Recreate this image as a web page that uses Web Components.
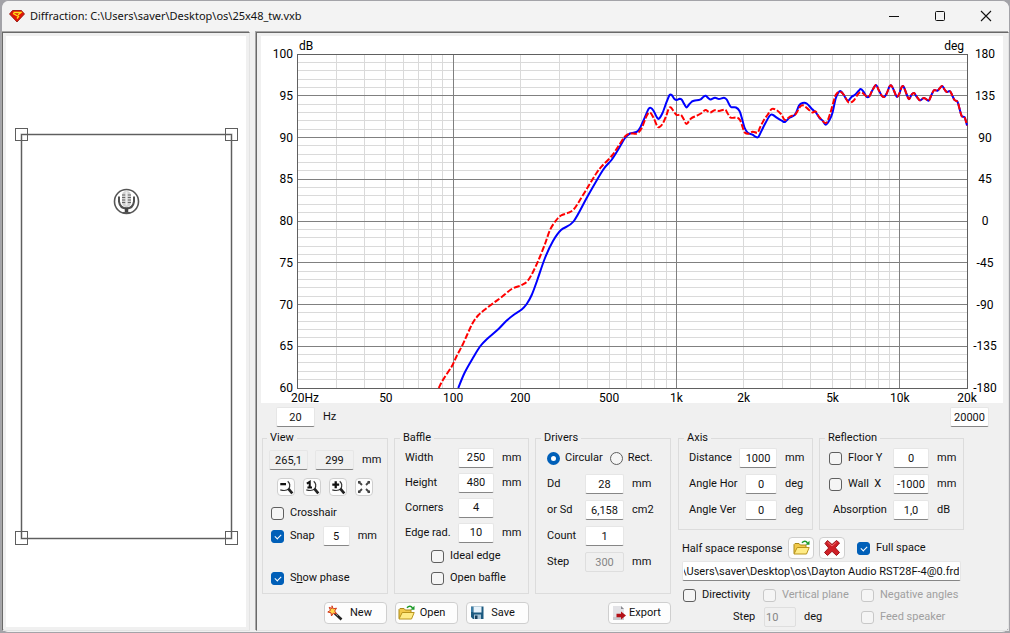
<!DOCTYPE html>
<html lang="en">
<head>
<meta charset="utf-8">
<title>Diffraction</title>
<style>
html, body { margin: 0; height: 100%; background: #a3a3a8; }
</style>
</head>
<body>
<diffraction-window></diffraction-window>
<script>
const define = (name, html, setup) => {
  const tpl = document.createElement('template');
  tpl.innerHTML = html;
  customElements.define(name, class extends HTMLElement {
    constructor() {
      super();
      this.attachShadow({ mode: 'open' }).append(tpl.content.cloneNode(true));
    }
    connectedCallback() { if (setup) setup(this, this.shadowRoot); }
  });
};

/* ---------- icons ---------- */
const icons = {
  gem: '<svg viewBox="0 0 16 14" width="16" height="14"><path d="M3.500 1.500h9L15.500 5 8 13 .5 5z" fill="#e01808" stroke="#8a0d06" stroke-width=".8"/><path d="M4.500 3.500h7.500L9 6M4 4.500l5.500 3L8 9.500" stroke="#ffe21a" stroke-width="1.300" fill="none"/></svg>',
  min: '<svg viewBox="0 0 12 12" width="12" height="12"><path d="M1 6.500h10" stroke="#111"/></svg>',
  max: '<svg viewBox="0 0 12 12" width="12" height="12"><rect x="1.500" y="1.500" width="9" height="9" rx="1" stroke="#111" fill="none"/></svg>',
  close: '<svg viewBox="0 0 12 12" width="12" height="12"><path d="M1 1l10 10M11 1L1 11" stroke="#111" stroke-width="1.100"/></svg>',
  zoomout: '<svg viewBox="1 0 14 14" width="16" height="16"><path d="M3 4.500h5" stroke="#111" stroke-width="2"/><path d="M9.500 2q3 2.500 1 6.500Q8 11 3 9.500" fill="none" stroke="#333"/><path d="M10 8.500l3.500 4" stroke="#222" stroke-width="2.400"/></svg>',
  zoomone: '<svg viewBox="1 0 14 14" width="16" height="16"><path d="M3.500 4L6 2.500V8M4 7.500h4" fill="none" stroke="#111" stroke-width="1.800"/><path d="M9.500 2q3 2.500 1 6.500Q8 11 3 9.500" fill="none" stroke="#333"/><path d="M10 8.500l3.500 4" stroke="#222" stroke-width="2.400"/></svg>',
  zoomin: '<svg viewBox="1 0 14 14" width="16" height="16"><path d="M3 5h6M6 2v6" stroke="#111" stroke-width="2"/><path d="M9.500 2q3 2.500 1 6.500Q8 11 3 9.500" fill="none" stroke="#333"/><path d="M10 8.500l3.500 4" stroke="#222" stroke-width="2.400"/></svg>',
  fit: '<svg viewBox="0 0 16 16" width="16" height="16"><path d="M2.500 2.500l3.500 3.500M13.500 2.500L10 6M2.500 13.500L6 10M13.500 13.500L10 10" stroke="#444" stroke-width="1.800"/><path d="M2 5V2h3zM14 5V2h-3zM2 11v3h3zM14 11v3h-3z" fill="#444"/></svg>',
  wand: '<svg viewBox="0 0 16 16" width="16" height="16"><path d="M7.500 8l7 6.500" stroke="#222" stroke-width="2.600"/><path d="M8 8l3 2.800" stroke="#999" stroke-width="1"/><path d="M5 .8l1.200 3 3.300-.6-1.800 2.800 1.800 2.800-3.200-.6L4.500 11 4 7.800.8 7l2.700-1.700-1.300-3L5 3.500z" fill="#ffd94a" stroke="#d2361c" stroke-width="1"/></svg>',
  folder: '<svg viewBox="0 0 17 16" width="17" height="16"><path d="M1 13.500V4.500l1-1h4l1.300 1.500H13V8" fill="#f2c94a" stroke="#a98a1a"/><path d="M1 14L4.200 7.500h12L13.500 14z" fill="#ffec86" stroke="#b8941c"/><path d="M9 2.800Q12-.3 14.500 3" fill="none" stroke="#1d9a2a" stroke-width="1.600"/><path d="M16.500.8v4h-4z" fill="#1d9a2a"/></svg>',
  disk: '<svg viewBox="0 0 16 16" width="16" height="16"><path d="M2 1.500h12.500V14H4l-2-2z" fill="#1c5a80"/><path d="M4.500 1.500h8v6h-8z" fill="#e8f3fb"/><path d="M5 9.500h7V14H5z" fill="#a9c4d6"/><path d="M6 10.500h2.500V14H6z" fill="#173f5c"/><path d="M3 2v5" stroke="#5da3d0"/></svg>',
  exporter: '<svg viewBox="0 0 16 16" width="16" height="16"><path d="M2 1h8l3 3v11H2z" fill="#e2e2e6"/><path d="M10 1v3h3z" fill="#8a8a90"/><path d="M2 12h11v3H2z" fill="#c9c9ce"/><path d="M5.500 8.800H10V6.500l5 4-5 4v-2.300H5.500z" fill="#b30f17"/></svg>',
  cross: '<svg viewBox="0 0 18 18" width="18" height="18"><path d="M2 4.500L4.500 1.500 9 5.500 13.500 1.500 16.500 4 12.300 8.800 16.500 13.500 13.500 16.500 9 12.300 4.500 16.500 1.500 13.500 5.700 9z" fill="#cf1f26" stroke="#9c1016"/><path d="M4.500 3l4.500 4 4.500-4" stroke="#ef6a6c" fill="none"/></svg>'
};

define('app-icon', `<style>:host{display:inline-flex;flex:none}i{display:flex}svg{display:block}</style><i></i>`,
  (el, root) => { root.querySelector('i').innerHTML = icons[el.getAttribute('name')] || ''; });

/* ---------- controls ---------- */
define('title-bar', `
<style>
:host{display:flex;align-items:center;height:31px;box-sizing:border-box;padding:0 0 2px 7px;background:#f3f3f3;border-radius:8px 8px 0 0;font-family:"Noto Sans","Liberation Sans",sans-serif;font-size:11px;line-height:16px;color:#111}
h1{flex:1;margin:0 0 0 5px;font:inherit}
button{display:flex;align-items:center;justify-content:center;width:46px;height:29px;border:0;padding:0;background:none}
</style>
<app-icon name="gem"></app-icon>
<h1><slot></slot></h1>
<button aria-label="Minimize"><app-icon name="min"></app-icon></button>
<button aria-label="Maximize"><app-icon name="max"></app-icon></button>
<button aria-label="Close"><app-icon name="close"></app-icon></button>`);

define('group-box', `
<style>
:host{display:block}
fieldset{margin:0;padding:0 0 0 var(--pad,8px);border:1px solid #dcdcdc;height:100%;box-sizing:border-box;min-width:0}
legend{margin-left:var(--legend,0);padding:0 3px;line-height:14px;height:14px}
</style>
<fieldset><legend></legend><slot></slot></fieldset>`,
  (el, root) => { root.querySelector('legend').textContent = el.getAttribute('caption'); });

define('num-field', `
<style>
:host{display:flex;align-items:center;white-space:nowrap;line-height:16px}
label{flex:none;width:var(--label,53px)}
label:empty{display:none}
input{flex:none;width:var(--field,36px);height:20px;box-sizing:border-box;margin:0;padding:0 1px;border:1px solid #e6e6e6;border-bottom-color:#868686;border-radius:2px;background:#fff;font:inherit;color:inherit;text-align:var(--align,center)}
input[readonly]{background:#f0f0f0}
input:disabled{background:#f0f0f0;color:#858585;border-color:#dedede}
span{margin-left:8px}
span:empty{display:none}
</style>
<label for="v"></label><input id="v" type="text"><span></span>`,
  (el, root) => {
    const input = root.querySelector('input');
    root.querySelector('label').textContent = el.getAttribute('label') || '';
    root.querySelector('span').textContent = el.getAttribute('unit') || '';
    input.value = el.getAttribute('value');
    input.readOnly = el.hasAttribute('readonly');
    input.disabled = el.hasAttribute('disabled');
    if (!el.hasAttribute('label')) input.setAttribute('aria-label', el.getAttribute('name'));
  });

define('check-box', `
<style>
:host{display:flex;align-items:center;white-space:nowrap;line-height:16px}
:host([disabled]){color:#a0a0a0}
label{display:flex;align-items:center}
input{appearance:none;flex:none;width:13px;height:13px;box-sizing:border-box;margin:0 6px 0 0;border:1px solid #5f5f5f;border-radius:3px;background:#f5f5f5;display:flex;justify-content:center}
input:disabled{border-color:#c8c8c8}
input:checked{border-color:#005fb8;background:#005fb8}
input:checked::before{content:"";width:3px;height:5px;margin-top:2px;border:solid #fff;border-width:0 1px 1px 0;transform:rotate(45deg)}
input[type=radio]{border-radius:50%;margin-right:5px}
input[type=radio]:checked{border:4px solid #005fb8;background:#fff}
input[type=radio]:checked::before{display:none}
</style>
<label><input type="checkbox"><span><slot></slot></span></label>`,
  (el, root) => {
    const input = root.querySelector('input');
    if (el.hasAttribute('radio')) input.type = 'radio';
    input.checked = el.hasAttribute('checked');
    input.disabled = el.hasAttribute('disabled');
  });

define('push-button', `
<style>
:host{display:inline-flex;width:63px;height:22px}
button{display:flex;align-items:center;width:100%;height:100%;box-sizing:border-box;padding:0 0 0 2px;border:1px solid #cfcfcf;border-radius:4px;background:#fdfdfd;font:inherit;color:inherit;line-height:16px}
span{flex:1;text-align:center;padding-right:7px}
:host([small]){width:18px;height:18px}
:host([icononly]){width:26px}
:host([small]) button,:host([icononly]) button{justify-content:center;padding:0}
:host([small]) span,:host([icononly]) span{display:none}
</style>
<button><span><slot></slot></span></button>`,
  (el, root) => {
    const icon = document.createElement('app-icon');
    icon.setAttribute('name', el.getAttribute('icon'));
    root.querySelector('button').prepend(icon);
    if (el.title) root.querySelector('button').setAttribute('aria-label', el.title);
  });

/* ---------- baffle drawing ---------- */
define('baffle-view', `
<style>
:host{display:flex;background:#fff}
svg{display:block;width:100%;height:100%;min-height:0}
</style>
<svg viewBox="0 0 240 591" preserveAspectRatio="xMinYMin" role="img" aria-label="Baffle outline">
<g fill="none" stroke="#5e5e5e">
<rect x="15.500" y="98.500" width="210" height="404" stroke="#b4b4b4" stroke-width="2"/>
<rect x="15.500" y="98.500" width="210" height="404"/>
<rect x="9.500" y="92.500" width="12" height="12"/><rect x="219.500" y="92.500" width="12" height="12"/>
<rect x="9.500" y="495.500" width="12" height="13"/><rect x="219.500" y="495.500" width="12" height="13"/>
</g>
<g transform="translate(120.500 165.500)">
<circle r="12" fill="#fff" stroke="#555" stroke-width="1.600"/>
<rect x="-4.500" y="-10.500" width="9" height="16" rx="4.500" fill="#d0d0d0"/>
<path d="M-4.500-6.500h3.500M-4.500-4h3.500M-4.500-1.500h3.500M-4.500 1h3.500M1-6.500h3.500M1-4h3.500M1-1.500h3.500M1 1h3.500" stroke="#666"/>
<path d="M0-10V4" stroke="#eee" stroke-width="2"/>
<path d="M-7.500-5V0Q-6.500 7 0 7T7.500 0V-5" fill="none" stroke="#505050" stroke-width="2"/>
<path d="M0 6v5" stroke="#444" stroke-width="3.500"/>
<path d="M-4 11.200h8" stroke="#555" stroke-width="1.500"/>
</g>
</svg>`);

/* ---------- response chart ---------- */
const blue = [458.3,388, 464.5,373, 473.5,357, 480,346.5, 487,339, 498.5,329, 506.7,320.5, 513.5,315, 521.7,309.5, 526.7,304, 531.7,295, 537.3,280, 545,258, 553,241, 561,230, 573.5,221.5, 587.5,196.5, 603,170, 611.5,160, 618.5,149, 625,138, 630,133.5, 636.5,132, 640,128, 645,117, 648.5,109, 650.7,107.9, 653.5,110.7, 656.7,117, 659,118.7, 662.5,113, 666.7,101.7, 669.5,95.2, 671.5,94.9, 674.5,99, 676.7,100, 679.5,98.7, 681.7,99.7, 684.5,104.5, 686.5,107.5, 688.7,105, 691.7,101.7, 695,100.5, 700,99.7, 703.5,96.7, 705.7,95.8, 708.5,98.3, 710.7,99.5, 715,97.7, 719,99, 724,97.7, 726.7,99.5, 730.7,106.7, 736,107.5, 739.5,111, 741.7,117.5, 744.5,127.5, 747.7,132.7, 752.5,134.7, 756.7,137.3, 759,136, 763.5,126.7, 769.5,116, 772.5,114.7, 776.7,117.7, 781.7,120.7, 785,122, 789.5,117.7, 795,114.7, 799,105.5, 802.5,103, 806.7,103.5, 811.7,108.7, 816,112.7, 819.5,118, 822.7,120.7, 825.7,124.7, 829.5,120, 832.5,112.7, 835.7,98.5, 838.5,92.5, 840.7,91.2, 843.5,94.5, 847.7,100.7, 851.7,96.7, 855,94.7, 858.5,91, 860.7,89, 863.5,91.7, 866.7,97];
const red = [438.7,388, 443.5,379, 451.7,366.5, 456.7,356, 462.5,345, 467.5,334, 472.7,323, 478.5,315, 485,309.5, 493.5,303, 501.7,297, 511.7,289, 521.7,285, 527.5,281, 533,272, 539,259, 545,244, 550,230, 556,220.5, 561,215.5, 568.5,212.7, 574,209, 580,200, 588.5,186, 596.7,172.7, 602.5,165.5, 611.7,156, 618.5,146, 625,136.5, 630,133.5, 637,133.5, 641.7,128, 646.7,115.7, 650,112.5, 653.5,117.7, 657,125.7, 659,127.2, 662.5,124, 666,116.5, 668.7,108.7, 670.7,107.3, 673.5,111, 676.7,115, 680.7,114.7, 683.5,118.7, 686.5,124, 691,118.5, 696.7,115.7, 701.7,113, 705.5,110, 710,112.5, 714.5,110.2, 719,110.9, 725,109.7, 727.7,113.5, 730.7,117.7, 736.7,117.5, 740,120, 742.7,127.5, 745,132.7, 748.5,133.7, 752.7,131.7, 757.5,132.7, 760,127.5, 763.5,120.7, 767.5,115, 771.7,109, 776,109.7, 781,114, 785,120, 790,116.5, 795.7,114, 800,106.7, 803.5,105.5, 808.5,109.5, 812.5,112.5, 815.7,111.5, 819,116.7, 825.7,123, 830,114, 833.5,101.7, 836,94.5, 840,91.7, 844,95, 848.5,102.3, 853.5,100.7, 858.5,93.5, 861.7,92.5, 866.7,96.5];
const tail = [869.5,96, 872.5,90, 876,85, 878.7,90, 881.7,95.7, 884,97, 886.7,93.5, 889.5,86.5, 891.5,85.7, 894,90.7, 896.7,96.7, 899,94.5, 901.7,87, 903.7,86.7, 906.7,94.5, 909,99.2, 911.7,94.5, 914,93, 916.7,96.7, 920,100.3, 924,97.9, 928.5,100.7, 931,96, 934,90.2, 937.7,90.5, 942,86, 944.5,89.5, 946.7,92, 950,91.2, 952.5,96, 954.5,100, 957.5,101.7, 959.5,108.5, 961.7,116, 964.7,117.5, 967,125.5];
const curve = flat => {
  const p = [];
  for (let i = 0; i < flat.length; i += 2) p.push([flat[i] - 297, flat[i + 1] - 54]);
  let d = `M${p[0]}`;
  for (let i = 0; i < p.length - 1; i++) {
    const a = p[i - 1] || p[i], b = p[i], c = p[i + 1], e = p[i + 2] || c;
    const q = (m, n, s) => [(m[0] + s * n[0] / 6).toFixed(1), (m[1] + s * n[1] / 6).toFixed(1)];
    d += `C${q(b, [c[0] - a[0], c[1] - a[1]], 1)} ${q(c, [e[0] - b[0], e[1] - b[1]], -1)} ${c[0].toFixed(1)} ${c[1].toFixed(1)}`;
  }
  return d;
};

define('response-chart', `
<style>
:host{display:grid;grid-template:18px minmax(200px,1fr) 15px / 36px 1fr 36px;box-sizing:border-box;background:#fff;font-size:12px;line-height:16px;color:#000}
.units{grid-area:1/2;display:flex;justify-content:space-between;padding:2px 3px 0 2px}
.scale{display:flex;flex-direction:column;justify-content:space-between;margin:-8px 0}
.db{grid-area:2/1;text-align:right;padding-right:4px}
.deg{grid-area:2/3;text-align:center}
.plot{grid-area:2/2;position:relative;min-height:0}
svg{position:absolute;inset:0;width:100%;height:100%;overflow:visible}
path{fill:none;vector-effect:non-scaling-stroke}
.freq{grid-area:3/2;display:grid;grid-template-columns:398fr 301fr 301fr 398fr 301fr 301fr 398fr 301fr 301fr 0;padding-top:2px}
.freq span{width:40px;margin-left:-20px;text-align:center}
.freq span:first-child{margin-left:-6px;text-align:left}
</style>
<div class="units"><span>dB</span><span>deg</span></div>
<div class="scale db"></div>
<div class="plot"><svg viewBox="0 0 670 334" preserveAspectRatio="none" role="img" aria-label="Frequency response"></svg></div>
<div class="scale deg"></div>
<div class="freq"></div>`,
  (el, root) => {
    const spans = (sel, list) => root.querySelector(sel).innerHTML = list.map(t => `<span>${t}</span>`).join('');
    spans('.db', [100, 95, 90, 85, 80, 75, 70, 65, 60]);
    spans('.deg', [180, 135, 90, 45, 0, -45, -90, -135, -180]);
    spans('.freq', ['20Hz', 50, 100, 200, 500, '1k', '2k', '5k', '10k', '20k']);
    let minor = '', major = '';
    for (let i = 1; i < 40; i++) {
      const line = `M0 ${Math.floor(i * 8.35) + .5}H670`;
      if (i % 5) minor += line; else major += line;
    }
    for (let dec = 10; dec <= 10000; dec *= 10)
      for (let n = 1; n < 10; n++) {
        const f = dec * n;
        if (f <= 20 || f >= 20000) continue;
        const line = `M${Math.floor(Math.log10(f / 20) / 3 * 670) + .5} 0V334`;
        if (n === 1) major += line; else minor += line;
      }
    root.querySelector('svg').innerHTML =
      `<g shape-rendering="crispEdges"><path d="${minor}" stroke="#dadada"/><path d="${major}" stroke="#808080"/>` +
      `<path d="M.5.5H670.500V334.500H.5z" stroke="#606060"/></g>` +
      `<path d="${curve(blue.concat(tail))}" stroke="#0000ff" stroke-width="2"/>` +
      `<path d="${curve(red.concat(tail))}" stroke="#ff0000" stroke-width="2" stroke-dasharray="6 2"/>`;
  });

/* ---------- control panel ---------- */
define('control-panel', `
<style>
:host{display:flex;gap:7px;padding:0 0 2px 1px}
.left{display:grid;grid-template-columns:126px 135px 136px;grid-template-rows:163px 22px;column-gap:6px;row-gap:8px}
.right{display:flex;flex-direction:column;width:286px}
.files{grid-column:1/3;display:flex;justify-content:flex-end;gap:8px}
.export{justify-self:end}
.row{display:flex;align-items:center;height:26px}
.view{--pad:6px;--field:39px}
.view .fields{height:30px;gap:7px}
.view .zoom{gap:8px;height:24px;padding-left:8px}
.view .cross{height:28px;padding-left:2px}
.view .snap{height:18px;padding-left:2px;--field:27px;justify-content:space-between;padding-right:10px}
.view .phase{height:22px;margin-top:22px;padding-left:2px}
.baffle{--pad:10px}
.baffle num-field{height:25px}
.baffle check-box{height:22px;padding-left:26px}
.drivers{--pad:11px;--label:38px;--field:39px}
.drivers .row{gap:7px}
.drivers num-field,.axis num-field{height:26px}
.boxes{display:grid;grid-template-columns:135px 145px;gap:6px;height:99px}
.axis{--pad:10px;--label:56px;--field:32px}
.axis .wide{--label:50px;--field:38px}
.refl{--pad:9px;--label:60px}
.refl check-box{width:64px}
.refl .abs{padding-left:4px}
.half{height:26px;margin-top:5px;padding-left:4px}
.half span{width:106px}
.half push-button{margin-right:5px}
.half check-box{margin-left:7px}
.path{--field:279px;--align:right;padding-left:4px}
.opts{display:grid;grid-template-columns:80px 98px 1fr;grid-auto-rows:22px;align-items:center;padding:3px 0 0 5px}
.opts num-field{grid-column:1/3;padding-left:50px;--label:31px;--field:32px;--align:left}
.baffle{--legend:-5px}.drivers{--legend:-6px}.refl{--legend:-4px}
.view{--legend:-2px}.axis{--legend:-5px}
</style>
<div class="left">
  <group-box class="view" caption="View">
    <div class="row fields"><num-field name="X" value="265,1" readonly></num-field><num-field name="Y" value="299" unit="mm" readonly></num-field></div>
    <div class="row zoom"><push-button small icon="zoomout" title="Zoom out"></push-button><push-button small icon="zoomone" title="Actual size"></push-button><push-button small icon="zoomin" title="Zoom in"></push-button><push-button small icon="fit" title="Fit"></push-button></div>
    <div class="row cross"><check-box>Crosshair</check-box></div>
    <div class="row snap"><check-box checked>Snap</check-box><num-field name="Snap step" value="5" unit="mm"></num-field></div>
    <div class="row phase"><check-box checked>S<u>h</u>ow phase</check-box></div>
  </group-box>
  <group-box class="baffle" caption="Baffle">
    <num-field label="Width" value="250" unit="mm"></num-field>
    <num-field label="Height" value="480" unit="mm"></num-field>
    <num-field label="Corners" value="4"></num-field>
    <num-field label="Edge rad." value="10" unit="mm"></num-field>
    <check-box>Ideal edge</check-box>
    <check-box>Open baffle</check-box>
  </group-box>
  <group-box class="drivers" caption="Drivers">
    <div class="row"><check-box radio checked>Circular</check-box><check-box radio>Rect.</check-box></div>
    <num-field label="Dd" value="28" unit="mm"></num-field>
    <num-field label="or Sd" value="6,158" unit="cm2"></num-field>
    <num-field label="Count" value="1"></num-field>
    <num-field label="Step" value="300" unit="mm" disabled></num-field>
  </group-box>
  <div class="files"><push-button icon="wand">New</push-button><push-button icon="folder">Open</push-button><push-button icon="disk">Save</push-button></div>
  <push-button class="export" icon="exporter">Export</push-button>
</div>
<div class="right">
  <div class="boxes">
    <group-box class="axis" caption="Axis">
      <num-field class="wide" label="Distance" value="1000" unit="mm"></num-field>
      <num-field label="Angle Hor" value="0" unit="deg"></num-field>
      <num-field label="Angle Ver" value="0" unit="deg"></num-field>
    </group-box>
    <group-box class="refl" caption="Reflection">
      <div class="row"><check-box>Floor Y</check-box><num-field name="Floor Y" value="0" unit="mm"></num-field></div>
      <div class="row"><check-box>Wall &nbsp;X</check-box><num-field name="Wall X" value="-1000" unit="mm"></num-field></div>
      <div class="row abs"><num-field label="Absorption" value="1,0" unit="dB"></num-field></div>
    </group-box>
  </div>
  <div class="row half"><span>Half space response</span><push-button icononly icon="folder" title="Open response"></push-button><push-button icononly icon="cross" title="Clear response"></push-button><check-box checked>Full space</check-box></div>
  <num-field class="path" name="Response file" value="\\Users\\saver\\Desktop\\os\\Dayton Audio RST28F-4@0.frd"></num-field>
  <div class="opts">
    <check-box>Directivity</check-box><check-box disabled>Vertical plane</check-box><check-box disabled>Negative angles</check-box>
    <num-field label="Step" value="10" unit="deg" disabled></num-field><check-box disabled>Feed speaker</check-box>
  </div>
</div>`, (el, root) => {
  /* long paths show their file name, so the field is scrolled to its end */
  const input = root.querySelector('.path').shadowRoot.querySelector('input');
  const toEnd = () => { input.scrollLeft = input.scrollWidth; };
  toEnd();
  addEventListener('load', toEnd);
});

/* ---------- window ---------- */
define('diffraction-window', `
<style>
:host{display:flex;flex-direction:column;min-height:100%;box-sizing:border-box;border:solid #a3a3a8;border-width:1px 1px 1px 2px;border-radius:8px;background:#f0f0f0;font-family:Roboto,"Liberation Sans",sans-serif;font-size:11px;color:#111}
main{flex:1;display:flex;gap:6px;padding-bottom:1px}
.pane{box-sizing:border-box;border:1px solid #e3e3e3;border-top:1px solid #696969;border-left:1px solid #696969;box-shadow:-1px -1px #a8a8a8}
.side{display:flex;flex:none;width:248px;padding:3px}
baffle-view{flex:1}
.work{flex:1;min-width:0;display:flex;flex-direction:column;padding:3px 5px 0 4px}
response-chart{flex:1}
.range{display:flex;justify-content:space-between;align-items:center;height:28px;padding:0 14px 0 15px;--field:39px}
</style>
<title-bar>Diffraction: C:\\Users\\saver\\Desktop\\os\\25x48_tw.vxb</title-bar>
<main>
  <div class="pane side"><baffle-view></baffle-view></div>
  <div class="pane work">
    <response-chart></response-chart>
    <div class="range"><num-field name="Lowest frequency" value="20" unit="Hz"></num-field><num-field name="Highest frequency" value="20000"></num-field></div>
    <control-panel></control-panel>
  </div>
</main>`);
</script>
</body>
</html>
